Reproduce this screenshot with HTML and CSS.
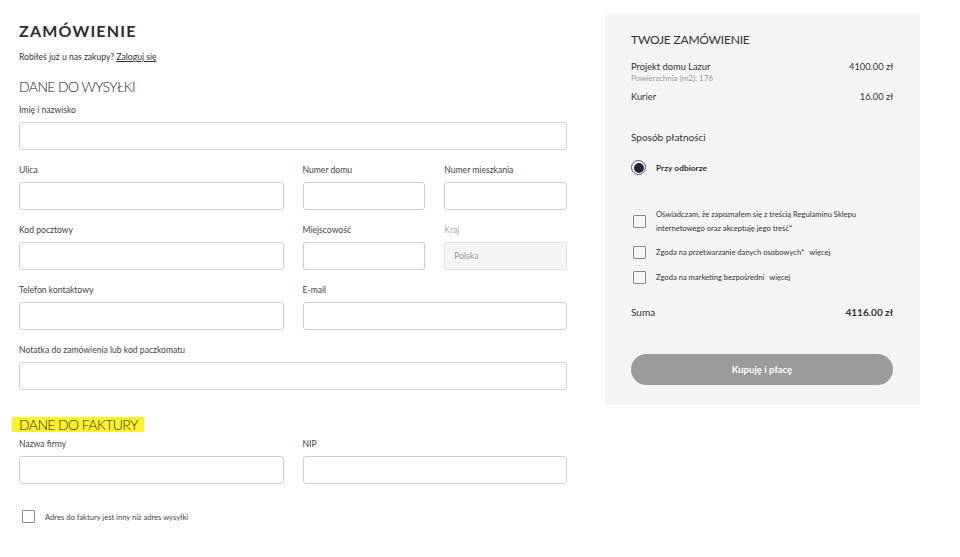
FILE: index.html
```html
<!DOCTYPE html>
<html lang="pl">
<head>
<meta charset="utf-8">
<title>Zamówienie</title>
<link rel="stylesheet" href="styles.css">
</head>
<body>
<div class="page">
  <div class="main">
    <h1 class="title">ZAMÓWIENIE</h1>
    <p class="login">Robiłeś już u nas zakupy? <a href="#" class="login-link">Zaloguj się</a></p>
    <h2 class="section">DANE DO WYSYŁKI</h2>
    <div class="grid">
      <div class="field span4"><label class="lbl">Imię i nazwisko</label><div class="inp"></div></div>
      <div class="field span2"><label class="lbl">Ulica</label><div class="inp"></div></div>
      <div class="field"><label class="lbl">Numer domu</label><div class="inp"></div></div>
      <div class="field"><label class="lbl">Numer mieszkania</label><div class="inp"></div></div>
      <div class="field span2"><label class="lbl">Kod pocztowy</label><div class="inp"></div></div>
      <div class="field"><label class="lbl">Miejscowość</label><div class="inp"></div></div>
      <div class="field"><label class="lbl lbl-muted">Kraj</label><div class="inp inp-disabled">Polska</div></div>
      <div class="field span2"><label class="lbl">Telefon kontaktowy</label><div class="inp"></div></div>
      <div class="field span2"><label class="lbl">E-mail</label><div class="inp"></div></div>
      <div class="field span4"><label class="lbl">Notatka do zamówienia lub kod paczkomatu</label><div class="inp"></div></div>
    </div>
    <h2 class="section section-invoice"><span class="highlight">DANE DO FAKTURY</span></h2>
    <div class="grid">
      <div class="field span2"><label class="lbl">Nazwa firmy</label><div class="inp"></div></div>
      <div class="field span2"><label class="lbl">NIP</label><div class="inp"></div></div>
    </div>
    <div class="check-row">
      <span class="box"></span><span class="check-text">Adres do faktury jest inny niż adres wysyłki</span>
    </div>
  </div>
  <aside class="summary">
    <h3 class="summary-title">TWOJE ZAMÓWIENIE</h3>
    <div class="item">
      <div class="item-info">
        <div class="item-name">Projekt domu Lazur</div>
        <div class="item-sub">Powierzchnia (m2): 176</div>
      </div>
      <div class="item-price">4100.00 zł</div>
    </div>
    <div class="item item-ship">
      <div class="item-name">Kurier</div>
      <div class="item-price">16.00 zł</div>
    </div>
    <div class="pay-title">Sposób płatności</div>
    <div class="radio-row"><span class="radio"><span class="radio-dot"></span></span><span class="radio-text">Przy odbiorze</span></div>
    <div class="consent consent-first"><span class="box"></span><span class="consent-text">Oświadczam, że zapoznałem się z treścią Regulaminu Sklepu<br>internetowego oraz akceptuję jego treść*</span></div>
    <div class="consent consent-second"><span class="box"></span><span class="consent-text">Zgoda na przetwarzanie danych osobowych* <span class="more">więcej</span></span></div>
    <div class="consent consent-third"><span class="box"></span><span class="consent-text">Zgoda na marketing bezpośredni <span class="more">więcej</span></span></div>
    <div class="sum"><span class="sum-label">Suma</span><span class="sum-value">4116.00 zł</span></div>
    <button class="buy" type="button">Kupuję i płacę</button>
  </aside>
</div>
</body>
</html>
```
FILE: styles.css
```css
* { box-sizing: border-box; }
html, body { margin: 0; padding: 0; background: #fff; }
body {
  font-family: Lato, "Noto Sans", sans-serif;
  color: #333;
  width: 960px;
  height: 557px;
  overflow: hidden;
}
.page {
  display: flex;
  align-items: flex-start;
}
.main {
  width: 567px;
  padding-left: 19px;
}
.title {
  margin: 21px 0 0;
  font-size: 16px;
  line-height: 20px;
  font-weight: 700;
  letter-spacing: 1.2px;
  color: #2e2e2e;
}
.login {
  margin: 9px 0 0;
  font-size: 8.6px;
  line-height: 14px;
  color: #333;
}
.login-link { color: #333; text-decoration: underline; }
.section {
  margin: 14px 0 0;
  font-size: 14px;
  line-height: 18px;
  font-weight: 300;
  letter-spacing: -0.6px;
  color: #222;
}
.grid {
  margin-top: 7px;
  display: grid;
  grid-template-columns: repeat(4, 1fr);
  column-gap: 19px;
  row-gap: 13px;
}
.field { display: flex; flex-direction: column; }
.span2 { grid-column: span 2; }
.span4 { grid-column: span 4; }
.lbl {
  font-size: 8.6px;
  line-height: 14px;
  margin-bottom: 5px;
  color: #444;
}
.lbl-muted { color: #aaa; }
.inp {
  height: 28px;
  border: 1px solid #cfcfcf;
  border-radius: 3px;
  background: #fff;
}
.inp-disabled {
  background: #f5f5f5;
  color: #999;
  font-size: 8.6px;
  line-height: 26px;
  padding-left: 9px;
  border-color: #e3e3e3;
}
.section-invoice {
  margin-top: 27px;
  line-height: 15px;
}
.highlight {
  display: inline-block;
  background: #fff22d;
  padding: 0 6px 0 7px;
  margin-left: -7px;
  line-height: 15px;
  color: #333;
}
.section-invoice + .grid { margin-top: 5px; }
.check-row {
  margin-top: 26px;
  display: flex;
  align-items: center;
  padding-left: 3px;
}
.box {
  flex: none;
  width: 13px;
  height: 13px;
  border: 1px solid #8a8a8a;
  border-radius: 1px;
  background: transparent;
}
.check-text {
  margin-left: 10px;
  font-size: 7.6px;
  color: #444;
}
.summary {
  margin: 14px 0 0 38px;
  width: 315px;
  background: #f5f5f5;
  padding: 18px 27px 20px 26px;
}
.summary-title {
  margin: 0;
  font-size: 12px;
  line-height: 16px;
  font-weight: 400;
  color: #333;
  letter-spacing: -0.2px;
}
.item {
  margin-top: 13px;
  display: flex;
  justify-content: space-between;
  align-items: flex-start;
}
.item-name { font-size: 9.3px; line-height: 12px; color: #333; }
.item-sub { font-size: 8px; line-height: 10px; color: #999; }
.item-price { font-size: 9.3px; line-height: 12px; color: #333; }
.item-ship { margin-top: 8px; }
.pay-title {
  margin-top: 27px;
  font-size: 10px;
  line-height: 14px;
}
.radio-row {
  margin-top: 16px;
  display: flex;
  align-items: center;
}
.radio {
  width: 15px;
  height: 15px;
  border: 1px solid #555;
  border-radius: 50%;
  display: flex;
  align-items: center;
  justify-content: center;
  background: #fff;
}
.radio-dot {
  width: 10px;
  height: 10px;
  border-radius: 50%;
  background: #22273a;
}
.radio-text {
  margin-left: 10px;
  font-size: 8.4px;
  font-weight: 700;
  color: #333;
}
.consent {
  display: flex;
  align-items: center;
  padding-left: 2px;
}
.consent-text {
  margin-left: 10px;
  font-size: 7.6px;
  line-height: 14px;
  color: #333;
}
.consent-first { margin-top: 32px; }
.consent-second { margin-top: 10px; }
.consent-third { margin-top: 11px; }
.more { margin-left: 3px; }
.sum {
  margin-top: 21px;
  display: flex;
  justify-content: space-between;
  font-size: 10px;
  line-height: 14px;
}
.sum-value { font-weight: 700; }
.buy {
  margin-top: 35px;
  display: block;
  width: 100%;
  height: 31px;
  border: none;
  border-radius: 16px;
  background: #9b9b9b;
  color: #fff;
  font-family: Lato, "Noto Sans", sans-serif;
  font-size: 9.6px;
  font-weight: 700;
}
```
